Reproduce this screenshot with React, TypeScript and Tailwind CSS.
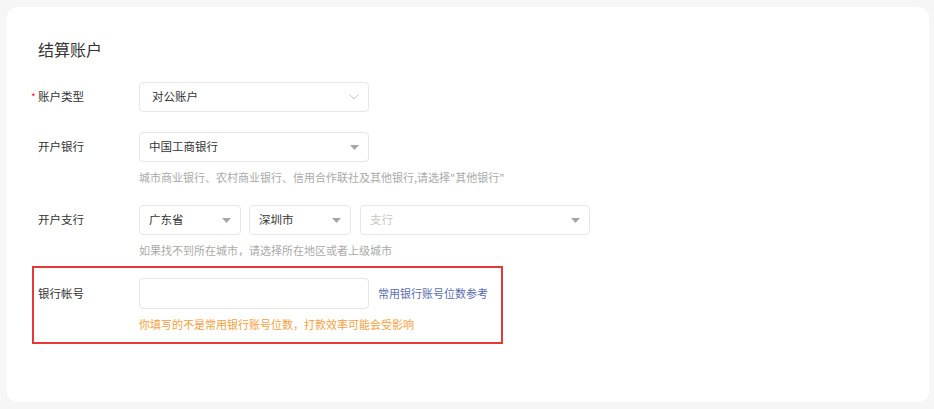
import { ReactNode } from "react";

const font = { fontFamily: '"Noto Sans CJK SC", "Noto Sans", sans-serif' };

function Caret() {
  return (
    <svg width="9" height="5" viewBox="0 0 9 5" className="shrink-0">
      <path d="M0 0 L9 0 L4.5 5 Z" fill="#a6a6a6" />
    </svg>
  );
}

function Chevron() {
  return (
    <svg width="10" height="6" viewBox="0 0 10 6" className="shrink-0">
      <path d="M0.5 0.5 L5 5 L9.5 0.5" fill="none" stroke="#c4c4c4" strokeWidth="1" />
    </svg>
  );
}

function Select({
  value,
  width,
  placeholder,
  chevron,
  pl = "pl-[9px]",
}: {
  value: string;
  width: string;
  placeholder?: boolean;
  chevron?: boolean;
  pl?: string;
}) {
  return (
    <div
      className={`${width} h-[30px] flex items-center justify-between ${pl} pr-[9px] border border-[#e6e6e6] rounded-[4px] bg-white`}
    >
      <span className={`text-[11.5px] ${placeholder ? "text-[#c8c8c8]" : "text-[#333]"}`}>{value}</span>
      {chevron ? <Chevron /> : <Caret />}
    </div>
  );
}

function Row({ label, required, children }: { label: string; required?: boolean; children: ReactNode }) {
  return (
    <div className="flex pl-[6px]">
      <div className="w-[101px] h-[30px] flex items-center">
        <span className="relative text-[11.5px] text-[#333]">
          {required && (
            <span className="absolute -left-[7px] top-[4px] text-[#f5222d] text-[10px] leading-none">*</span>
          )}
          {label}
        </span>
      </div>
      <div className="flex flex-col">{children}</div>
    </div>
  );
}

function Hint({ children }: { children: ReactNode }) {
  return <div className="mt-[7px] leading-[16px] text-[11px] text-[#aaa]">{children}</div>;
}

export default function App() {
  return (
    <div className="min-h-[409px] bg-[#f6f6f6] pl-[7px] pt-[7px] pr-[5px] pb-[7px]" style={font}>
      <div className="h-[395px] bg-white rounded-[10px] pl-[25px] pt-[30px]">
        <h2 className="pl-[6px] leading-[24px] text-[16px] text-[#333]">结算账户</h2>

        <div className="mt-[21px] flex flex-col">
          <Row label="账户类型" required>
            <Select value="对公账户" width="w-[230px]" chevron pl="pl-[12px]" />
          </Row>

          <div className="mt-[20px]">
            <Row label="开户银行">
              <Select value="中国工商银行" width="w-[230px]" />
              <Hint>城市商业银行、农村商业银行、信用合作联社及其他银行,请选择"其他银行"</Hint>
            </Row>
          </div>

          <div className="mt-[20px]">
            <Row label="开户支行">
              <div className="flex">
                <Select value="广东省" width="w-[102px]" />
                <div className="ml-[8px]">
                  <Select value="深圳市" width="w-[102px]" />
                </div>
                <div className="ml-[9px]">
                  <Select value="支行" width="w-[230px]" placeholder />
                </div>
              </div>
              <Hint>如果找不到所在城市，请选择所在地区或者上级城市</Hint>
            </Row>
          </div>

          <div className="mt-[8px] w-[471px] border-2 border-[#e53935] pt-[10px] pb-[10px] pl-[4px]">
            <div className="flex">
              <div className="w-[101px] h-[31px] flex items-center">
                <span className="text-[11.5px] text-[#333]">银行帐号</span>
              </div>
              <div className="flex flex-col">
                <div className="flex items-center">
                  <div className="w-[230px] h-[31px] border border-[#e6e6e6] rounded-[4px] bg-white" />
                  <a className="ml-[9px] text-[11px] text-[#5a6db0] cursor-pointer">常用银行账号位数参考</a>
                </div>
                <div className="mt-[7px] leading-[16px] text-[11px] text-[#f5a03c]">
                  你填写的不是常用银行账号位数，打款效率可能会受影响
                </div>
              </div>
            </div>
          </div>
        </div>
      </div>
    </div>
  );
}
